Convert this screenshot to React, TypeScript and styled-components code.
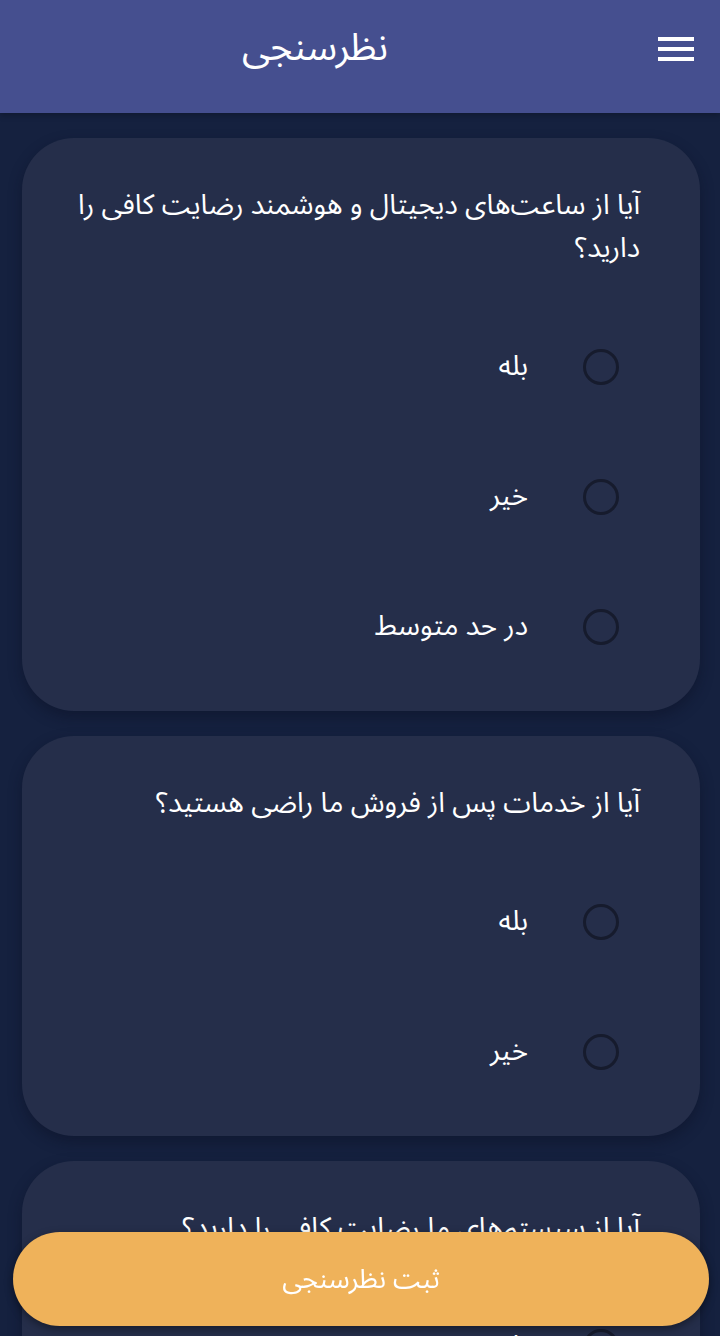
import React from "react";
import styled, { createGlobalStyle } from "styled-components";

const Global = createGlobalStyle`
  html, body { margin: 0; padding: 0; background: #15213f; }
  body { font-family: "Noto Sans Arabic", "Noto Sans", "DejaVu Sans", sans-serif; }
  * { box-sizing: border-box; }
`;

const Page = styled.div`
  direction: rtl;
  min-height: 100vh;
  background: #15213f;
`;

const Header = styled.header`
  height: 113px;
  background: #454f8f;
  display: flex;
  align-items: center;
  justify-content: center;
  position: relative;
  box-shadow: 0 2px 6px rgba(0,0,0,0.25);
`;

const Title = styled.h1`
  margin: 0;
  color: #fff;
  font-size: 38px;
  font-weight: 400;
  transform: translate(-45px, -9px);
`;

const Burger = styled.button`
  position: absolute;
  right: 26px;
  top: 37px;
  width: 36px;
  height: 24px;
  background: none;
  border: none;
  padding: 0;
  display: flex;
  flex-direction: column;
  justify-content: space-between;
  span { display: block; height: 4px; background: #fff; }
`;

const List = styled.main`
  display: flex;
  flex-direction: column;
  gap: 25px;
  padding: 25px 20px 200px 22px;
`;

const Card = styled.section<{ $pb: number }>`
  background: #252e4a;
  border-radius: 52px;
  padding: 46px 60px 0 40px;
  box-shadow: 0 6px 14px rgba(10, 15, 35, 0.45);
  padding-bottom: ${p => p.$pb}px;
`;

const Question = styled.p`
  margin: 0;
  color: #fff;
  font-size: 28px;
  line-height: 43px;
`;

const Options = styled.div<{ $mt: number }>`
  display: flex;
  flex-direction: column;
  margin-top: ${p => p.$mt}px;
  gap: 93px;
`;

const Option = styled.label`
  display: flex;
  align-items: center;
  gap: 55px;
  padding-right: 21px;
  color: #fff;
  font-size: 28px;
  height: 37px;
`;

const Radio = styled.span`
  width: 36px;
  height: 36px;
  border-radius: 50%;
  border: 3.5px solid #161b2d;
  flex: none;
`;

const Submit = styled.button`
  position: fixed;
  left: 13px;
  right: 11px;
  bottom: 10px;
  height: 94px;
  border: none;
  border-radius: 47px;
  background: #efb25a;
  color: #fff;
  font-family: inherit;
  font-size: 27px;
  box-shadow: 0 3px 8px rgba(0,0,0,0.4);
`;

const surveys = [
  { q: "آیا از ساعت‌های دیجیتال و هوشمند رضایت کافی را دارید؟", opts: ["بله", "خیر", "در حد متوسط"] },
  { q: "آیا از خدمات پس از فروش ما راضی هستید؟", opts: ["بله", "خیر"] },
  { q: "آیا از سیستم‌های ما رضایت کافی را دارید؟", opts: ["بله", "خیر"] },
];

export default function App() {
  return (
    <Page>
      <Global />
      <Header>
        <Title>نظرسنجی</Title>
        <Burger aria-label="menu"><span /><span /><span /></Burger>
      </Header>
      <List>
        {surveys.map((s, i) => (
          <Card key={i} $pb={66}>
            <Question>{s.q}</Question>
            <Options $mt={78}>
              {s.opts.map(o => (
                <Option key={o}><Radio />{o}</Option>
              ))}
            </Options>
          </Card>
        ))}
      </List>
      <Submit>ثبت نظرسنجی</Submit>
    </Page>
  );
}
